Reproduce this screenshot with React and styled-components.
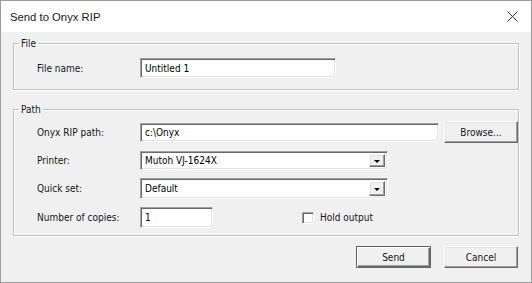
import React from 'react';
import styled, { createGlobalStyle } from 'styled-components';

const GlobalStyle = createGlobalStyle`
  html, body {
    margin: 0;
    padding: 0;
    background: #ffffff;
  }
  * {
    box-sizing: border-box;
  }
`;

const Window = styled.div`
  width: 532px;
  height: 283px;
  border: 1px solid #9c9c9c;
  background: #f0f0f0;
  display: flex;
  flex-direction: column;
  font-family: "DejaVu Sans Condensed", "Liberation Sans", Arial, sans-serif;
  font-size: 10px;
  color: #14161c;
`;

const TitleBar = styled.div`
  height: 31px;
  flex: none;
  background: #ffffff;
  display: flex;
  align-items: center;
  justify-content: space-between;
  padding: 0 13px 0 9px;
`;

const Title = styled.span`
  font-family: "Liberation Sans", Arial, sans-serif;
  font-size: 11.3px;
  color: #1a1a1a;
`;

const CloseIcon = styled.svg`
  width: 11px;
  height: 11px;
  display: block;
`;

const Body = styled.div`
  padding: 5px 12px 0 12px;
  display: flex;
  flex-direction: column;
`;

const Group = styled.fieldset`
  margin: ${p => p.$top || 0}px 0 0 0;
  padding: 0;
  min-width: 0;
  height: ${p => p.$height}px;
  border: 1px solid #c2c2c2;
  box-shadow: inset 1px 1px 0 #ffffff, 1px 1px 0 #ffffff;
`;

const Legend = styled.legend`
  margin-left: 5px;
  padding: 0 2px;
  line-height: 13px;
`;

const Grid = styled.div`
  display: grid;
  grid-template-columns: 103px 1fr;
  grid-template-rows: ${p => p.$rows};
  row-gap: 8px;
  align-items: center;
  padding: ${p => p.$padTop}px 0 0 23px;
`;

const Label = styled.label`
  white-space: nowrap;
`;

const Field = styled.div`
  display: flex;
  align-items: center;
  min-width: 0;
`;

const sunken = `
  background: #ffffff;
  border: 1px solid;
  border-color: #a0a0a0 #ffffff #ffffff #a0a0a0;
  box-shadow: inset 1px 1px 0 #696969, inset -1px -1px 0 #e3e3e3;
`;

const TextBox = styled.input`
  ${sunken}
  width: ${p => (p.$width ? `${p.$width}px` : 'auto')};
  flex: ${p => (p.$width ? 'none' : '1')};
  min-width: 0;
  height: ${p => p.$height}px;
  padding: 0 4px;
  font-family: inherit;
  font-size: 10px;
  color: #000;
  outline: none;
`;

const Combo = styled.div`
  ${sunken}
  width: 248px;
  height: ${p => p.$height}px;
  display: flex;
  align-items: stretch;
  padding: 2px;
`;

const ComboText = styled.span`
  flex: 1;
  display: flex;
  align-items: center;
  padding-left: 2px;
  color: #000;
`;

const raised = `
  background: #f0f0f0;
  border: 1px solid;
  border-color: #ffffff #696969 #696969 #ffffff;
  box-shadow: inset -1px -1px 0 #a0a0a0, inset 1px 1px 0 #e3e3e3;
`;

const DropButton = styled.span`
  ${raised}
  width: 16px;
  display: flex;
  align-items: center;
  justify-content: center;

  &::after {
    content: '';
    border-left: 3px solid transparent;
    border-right: 3px solid transparent;
    border-top: 3px solid #000;
    margin-top: 1px;
  }
`;

const Button = styled.button`
  ${raised}
  width: ${p => p.$width}px;
  height: 22px;
  margin-left: ${p => p.$gap || 0}px;
  flex: none;
  padding: 0;
  font-family: inherit;
  font-size: 10px;
  color: #14161c;
  ${p =>
    p.$default &&
    `
    border-color: #646464;
    box-shadow: inset 1px 1px 0 #ffffff, inset -1px -1px 0 #696969, inset -2px -2px 0 #a0a0a0;
  `}
`;

const CheckLabel = styled.label`
  display: flex;
  align-items: center;
  gap: 6px;
  margin-left: ${p => p.$gap}px;
`;

const CheckBox = styled.span`
  ${sunken}
  width: 12px;
  height: 12px;
  display: inline-block;
`;

const Footer = styled.div`
  display: flex;
  justify-content: flex-end;
  margin-top: 10px;
  padding-right: 1px;
`;

export default function App() {
  return (
    <>
      <GlobalStyle />
      <Window>
        <TitleBar>
          <Title>Send to Onyx RIP</Title>
          <CloseIcon viewBox="0 0 11 11">
            <path d="M0.5 0.5 L10.5 10.5 M10.5 0.5 L0.5 10.5" stroke="#2b2b2b" strokeWidth="1" fill="none" />
          </CloseIcon>
        </TitleBar>
        <Body>
          <Group $height={53}>
            <Legend>File</Legend>
            <Grid $rows="20px" $padTop={8}>
              <Label>File name:</Label>
              <Field>
                <TextBox $width={196} $height={20} defaultValue="Untitled 1" />
              </Field>
            </Grid>
          </Group>

          <Group $height={133} $top={13}>
            <Legend>Path</Legend>
            <Grid $rows="22px 19px 21px 21px" $padTop={5}>
              <Label>Onyx RIP path:</Label>
              <Field>
                <TextBox $height={19} defaultValue="c:\Onyx" />
                <Button $width={74} $gap={5}>Browse...</Button>
              </Field>

              <Label>Printer:</Label>
              <Field>
                <Combo $height={19}>
                  <ComboText>Mutoh VJ-1624X</ComboText>
                  <DropButton />
                </Combo>
              </Field>

              <Label>Quick set:</Label>
              <Field>
                <Combo $height={21}>
                  <ComboText>Default</ComboText>
                  <DropButton />
                </Combo>
              </Field>

              <Label>Number of copies:</Label>
              <Field>
                <TextBox $width={73} $height={21} defaultValue="1" />
                <CheckLabel $gap={89}>
                  <CheckBox />
                  Hold output
                </CheckLabel>
              </Field>
            </Grid>
          </Group>

          <Footer>
            <Button $width={75} $default>Send</Button>
            <Button $width={74} $gap={13}>Cancel</Button>
          </Footer>
        </Body>
      </Window>
    </>
  );
}
